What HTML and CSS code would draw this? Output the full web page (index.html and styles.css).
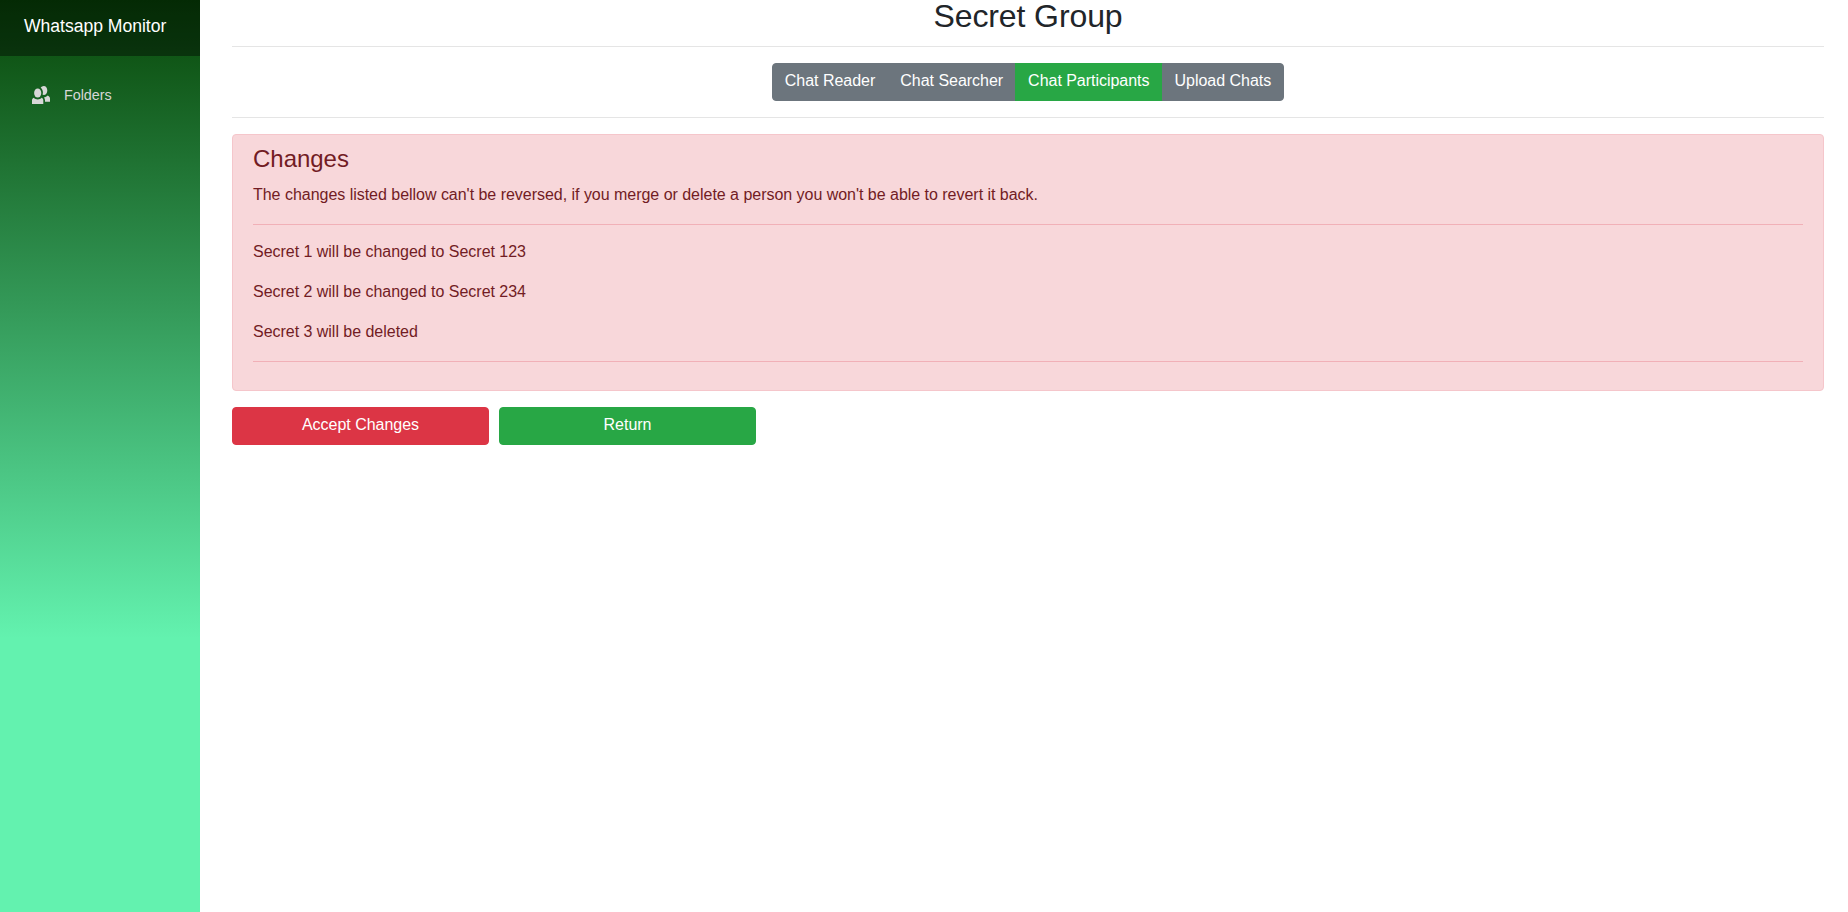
FILE: index.html
```html
<!DOCTYPE html>
<html lang="en">
<head>
<meta charset="utf-8">
<title>Whatsapp Monitor</title>
<link rel="stylesheet" href="styles.css">
</head>
<body>
<div class="page">
  <aside class="sidebar">
    <div class="top-row"><a class="brand">Whatsapp Monitor</a></div>
    <nav class="nav"><a class="nav-link"><svg class="icon" viewBox="0 0 18 18"><ellipse cx="5.7" cy="7" rx="3.6" ry="4.6"/><path d="M8.7 1.8C9.4.7 10.6 0 11.8 0c2 0 3.5 1.9 3.5 4.4s-1.5 4.5-3.5 4.5c-.5 0-.9-.1-1.3-.3.3-.8.4-1.5.4-2.3 0-1.800-.9-3.500-2.200-4.500zM15.500 9.600c1.500.5 2.500 1.600 2.500 3v3.100h-5v-1.400c0-1.200-.4-2.100-1.100-2.800 1.500-.1 2.800-.8 3.600-1.900zM1.700 11.800c1 1 2.500 1.600 4 1.600s3-.6 4-1.600c1 .5 1.600 1.400 1.600 2.600V18H0v-3.600c0-1.200.7-2.100 1.700-2.600z"/></svg>Folders</a></nav>
  </aside>
  <main class="main">
    <h2 class="title">Secret Group</h2>
    <hr class="rule">
    <div class="tabs">
      <div class="btn-group"><button class="btn secondary">Chat Reader</button><button class="btn secondary">Chat Searcher</button><button class="btn success">Chat Participants</button><button class="btn secondary">Upload Chats</button></div>
    </div>
    <hr class="rule">
    <section class="alert">
      <h4 class="alert-heading">Changes</h4>
      <p>The changes listed bellow can't be reversed, if you merge or delete a person you won't be able to revert it back.</p>
      <hr class="rule alert-rule">
      <p>Secret 1 will be changed to Secret 123</p>
      <p>Secret 2 will be changed to Secret 234</p>
      <p>Secret 3 will be deleted</p>
      <hr class="rule alert-rule">
    </section>
    <div class="actions"><button class="btn danger">Accept Changes</button><button class="btn success">Return</button></div>
  </main>
</div>
</body>
</html>
```
FILE: styles.css
```css
*, *::before, *::after { box-sizing: border-box; }
body { margin: 0; font: 400 16px/1.5 "Liberation Sans", Arial, sans-serif; letter-spacing: -0.026px; color: #212529; background: #fff; }
.page { display: flex; height: 100vh; overflow: hidden; }
.sidebar { width: 200px; flex: none; background: linear-gradient(180deg, #084708 0%, #63f2af 70%); }
.top-row { height: 56px; padding: 0 24px; display: flex; align-items: center; background: rgba(0, 0, 0, .4); }
.brand { color: #fff; font-size: 17.6px; letter-spacing: -0.03px; white-space: nowrap; padding-bottom: 4px; }
.nav { padding: 16px 16px 0; }
.nav-link { display: flex; align-items: center; height: 48px; padding: 0 16px; color: #d7d7d7; font-size: 14.4px; letter-spacing: -0.05px; }
.icon { width: 18px; height: 18px; margin: 0 14px 3px 0; fill: currentColor; }
.main { flex: 1; padding: 0 24px 0 32px; }
.title { margin: 0 0 -2px; font-size: 32px; font-weight: 500; line-height: 32px; letter-spacing: -0.1px; text-align: center; }
.rule { margin: 16px 0; border: 0; border-top: 1px solid rgba(0, 0, 0, .1); }
.tabs { display: flex; justify-content: center; }
.btn-group { display: flex; }
.btn { height: 38px; padding: 5px 12px 7px; border: 1px solid; border-radius: 4px; color: #fff; font: inherit; letter-spacing: inherit; }
.btn-group .btn { border-radius: 0; }
.btn-group .btn + .btn { margin-left: -1px; }
.btn-group .btn:first-child { border-radius: 4px 0 0 4px; }
.btn-group .btn:last-child { border-radius: 0 4px 4px 0; }
.secondary { background: #6c757d; border-color: #6c757d; }
.success { background: #28a745; border-color: #28a745; }
.danger { background: #dc3545; border-color: #dc3545; }
.alert { margin-bottom: 16px; padding: 10px 20px 12px; color: #721c24; background: #f8d7da; border: 1px solid #f5c6cb; border-radius: 4px; }
.alert-heading { margin: 0 0 9px; font-size: 24px; font-weight: 500; line-height: 1.2; }
.alert p { margin: 0 0 16px; }
.alert-rule { margin: 17px 0 15px; border-top-color: #f1b0b7; }
.alert-rule:last-child { margin-bottom: 16px; }
.actions { display: flex; gap: 10px; }
.actions .btn { width: 257px; }
```
